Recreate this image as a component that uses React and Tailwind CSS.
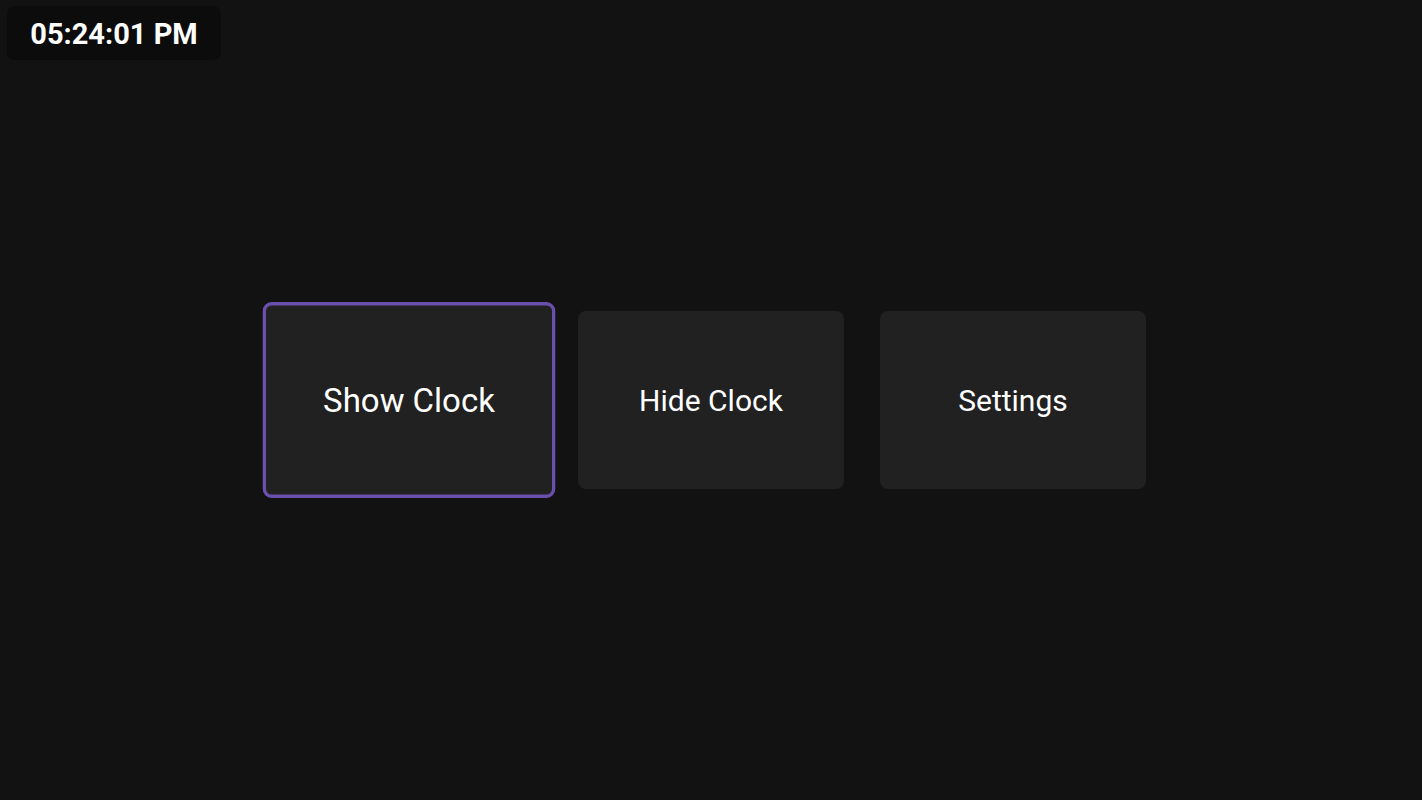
import React, { useState } from "react";

const items = ["Show Clock", "Hide Clock", "Settings"];

export default function App() {
  const [focused, setFocused] = useState(0);

  return (
    <div
      className="relative h-screen w-full bg-[#121212] flex items-center justify-center"
      style={{ fontFamily: "Roboto, 'Liberation Sans', sans-serif" }}
    >
      {/* overlay clock */}
      <div className="absolute left-[7px] top-[6px] w-[214px] h-[54px] rounded-lg bg-[#0c0c0c] flex items-center justify-center pt-[3px]">
        <span className="text-[29px] font-bold text-white">05:24:01 PM</span>
      </div>

      <div className="flex gap-9">
        {items.map((label, i) => (
          <button
            key={label}
            onMouseEnter={() => setFocused(i)}
            className={
              "w-[266px] h-[178px] rounded-lg bg-[#212121] border-[3px] flex items-center justify-center text-[30px] text-white outline-none " +
              (focused === i ? "scale-110 border-[#6a50ad]" : "border-transparent")
            }
          >
            {label}
          </button>
        ))}
      </div>
    </div>
  );
}
